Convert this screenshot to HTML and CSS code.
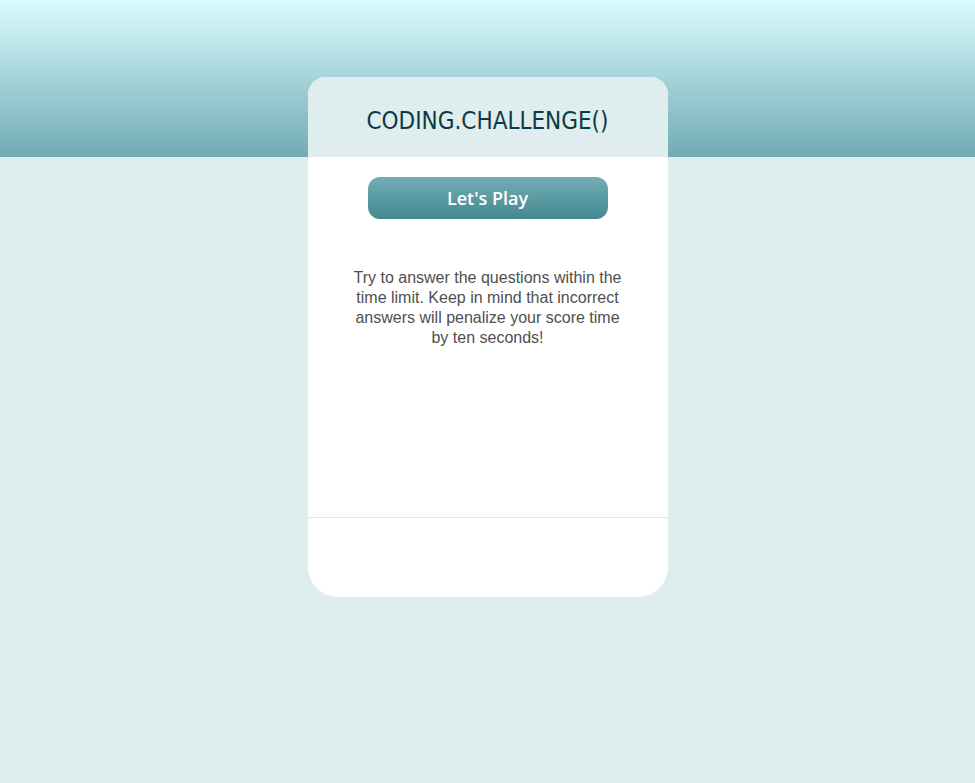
FILE: index.html
```html
<!DOCTYPE html>
<html lang="en">
<head>
<meta charset="utf-8">
<title>Coding Challenge</title>
<link rel="stylesheet" href="styles.css">
</head>
<body>
<main class="card">
  <header class="card-header">
    <h1 class="title">CODING.CHALLENGE()</h1>
  </header>
  <section class="card-body">
    <button class="play-btn" type="button">Let's Play</button>
    <p class="intro">Try to answer the questions within the time limit. Keep in mind that incorrect answers will penalize your score time by ten seconds!</p>
  </section>
  <footer class="card-footer"></footer>
</main>
</body>
</html>
```

FILE: styles.css
```css
html, body {
  margin: 0;
  padding: 0;
}
body {
  min-height: 783px;
  background: linear-gradient(#dafcff, #70abb4) no-repeat top left / 100% 157px, #dfedee;
  font-family: "Liberation Sans", Arial, sans-serif;
  padding-top: 77px;
  box-sizing: border-box;
}
.card {
  width: 360px;
  margin: 0 auto;
  background: #ffffff;
  border-radius: 18px 18px 30px 30px;
  overflow: hidden;
  display: flex;
  flex-direction: column;
}
.card-header {
  height: 80px;
  background: #dfedee;
  display: flex;
  align-items: center;
  justify-content: center;
}
.title {
  margin: 0;
  font-family: "DejaVu Sans Condensed", "DejaVu Sans", sans-serif;
  font-stretch: condensed;
  font-weight: normal;
  font-size: 24px;
  letter-spacing: 0;
  color: #0c3a44;
  padding-top: 8px;
}
.card-body {
  height: 360px;
  display: flex;
  flex-direction: column;
  align-items: center;
  padding-top: 20px;
  box-sizing: border-box;
}
.play-btn {
  width: 240px;
  height: 42px;
  border: none;
  border-radius: 12px;
  background: linear-gradient(#73adb4, #438890);
  color: #ffffff;
  font-family: "Open Sans", sans-serif;
  font-size: 18px;
  font-weight: 600;
  cursor: pointer;
  padding: 0;
}
.intro {
  margin: 49px 0 0;
  width: 272px;
  text-align: center;
  font-size: 16px;
  line-height: 20px;
  color: #4f4f4f;
}
.card-footer {
  height: 79px;
  border-top: 1px solid #e0ecec;
}
```
